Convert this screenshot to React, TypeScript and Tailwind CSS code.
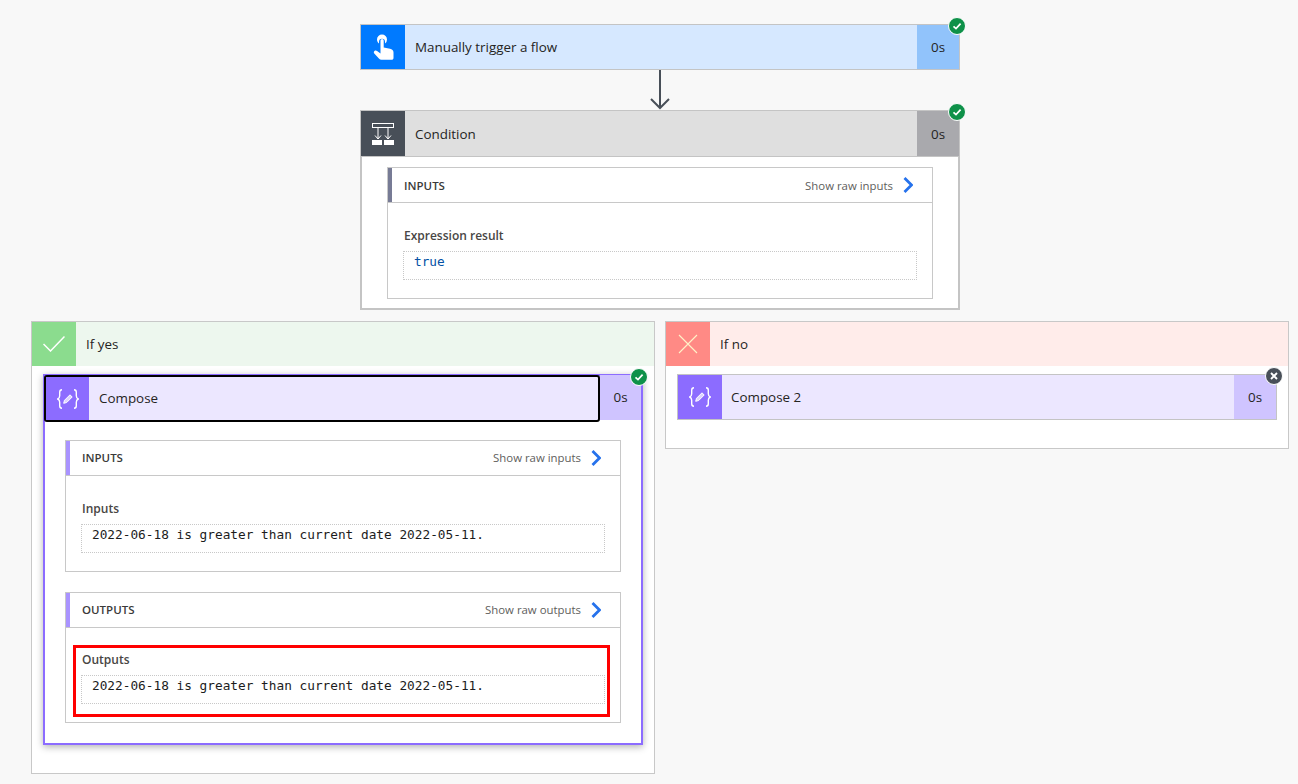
import type { ReactNode } from "react";

const sans = "font-['Open_Sans','Noto_Sans',sans-serif]";

function OkBadge({ className }: { className: string }) {
  return (
    <span className={`absolute z-10 flex h-[18px] w-[18px] items-center justify-center rounded-full border border-white bg-[#0e9149] ${className}`}>
      <svg viewBox="0 0 10 10" className="h-[10px] w-[10px]" fill="none" stroke="white" strokeWidth="1.7">
        <path d="M1.5 5.3 4 7.6 8.6 2.6" />
      </svg>
    </span>
  );
}

function SkipBadge({ className }: { className: string }) {
  return (
    <span className={`absolute z-10 flex h-[18px] w-[18px] items-center justify-center rounded-full border border-white bg-[#484f58] ${className}`}>
      <svg viewBox="0 0 10 10" className="h-[10px] w-[10px]" fill="none" stroke="white" strokeWidth="1.9">
        <path d="M2 2 8 8M8 2 2 8" />
      </svg>
    </span>
  );
}

function HandIcon() {
  return (
    <svg viewBox="-2 0 24 28" className="h-[28px] w-[24px]" fill="white">
      <path d="M9 1.5a5 5 0 0 0-5 5c0 1.7.8 3.2 2 4.100V8.800a3 3 0 1 1 6 0v1.800a5 5 0 0 0 2-4.100 5 5 0 0 0-5-5Z" />
      <path d="M7.500 7.500a1.600 1.600 0 0 1 3.200 0v7l6.300 1.300c2 .4 3.500 1.700 3.500 3.700V25c0 1-.8 1.800-1.800 1.800H8.500c-1 0-1.900-.4-2.600-1.200L1.300 20.500c-.7-.8-.6-2 .2-2.600.8-.6 1.900-.5 2.600.2l3.400 2.400Z" />
    </svg>
  );
}

function ConditionIcon() {
  return (
    <svg viewBox="0 0 22 22" className="h-[22px] w-[22px]" fill="none" stroke="white">
      <rect x=".5" y=".5" width="21" height="4" />
      <path d="M6 5V16M16 5V16M3 12.500l3 3.500 3-3.500M13 12.500l3 3.500 3-3.500" />
      <rect x="0" y="17" width="10" height="5" fill="white" stroke="none" />
      <rect x="12" y="17" width="10" height="5" fill="white" stroke="none" />
    </svg>
  );
}

function ComposeIcon() {
  return (
    <svg viewBox="0 0 22 20" className="h-[20px] w-[22px]" fill="none" stroke="white" strokeWidth="1.400">
      <path d="M5 .8c-1.800 0-2.300.9-2.300 2.500v3.500c0 1.800-.5 2.700-2 3.200 1.500.5 2 1.400 2 3.200v3.500c0 1.600.5 2.500 2.300 2.500" />
      <path d="M17 .8c1.800 0 2.300.9 2.300 2.500v3.500c0 1.800.5 2.700 2 3.200-1.500.5-2 1.400-2 3.200v3.500c0 1.600-.5 2.500-2.300 2.500" />
      <path d="M6.700 14.300 7.500 11.300 13 5.800 15.200 8 9.700 13.500Z" fill="white" fillOpacity="0.7" strokeWidth="1" />
    </svg>
  );
}

function Chevron() {
  return (
    <svg viewBox="0 0 10 16" className="ml-[10px] h-[16px] w-[10px]" fill="none" stroke="#2672ec" strokeWidth="2.800">
      <path d="M1.500 1 8.500 8 1.500 15" />
    </svg>
  );
}

function Panel({
  title,
  link,
  bar,
  label,
  value,
  mono,
  labelGap,
  head,
}: {
  title: string;
  link: string;
  bar: string;
  label: string;
  value: string;
  mono: string;
  labelGap: string;
  head: string;
}) {
  return (
    <div className="border border-[#c8c8c8] bg-white">
      <div className="flex h-[35px] items-center border-b border-[#c8c8c8]">
        <div className={`h-full w-[4px] ${bar}`} />
        <span className={`ml-[12px] flex-1 text-[11.500px] font-semibold text-[#3b3a39] ${head}`}>{title}</span>
        <span className={`text-[11.400px] text-[#605e5c] ${head}`}>{link}</span>
        <span className="mr-[19px]">
          <Chevron />
        </span>
      </div>
      <div className="px-[15px] pb-[18px] pt-[25px]">
        <div className={`h-[16px] pl-px text-[12px] font-semibold leading-[16px] text-[#484644] ${labelGap}`}>{label}</div>
        <div className={`h-[29px] border border-dotted border-[#c8c8c8] pl-[10px] font-['DejaVu_Sans_Mono',monospace] text-[12.770px] leading-[19px] ${mono}`}>
          {value}
        </div>
      </div>
    </div>
  );
}

function Compose2() {
  return (
    <div className="relative flex h-[46px] border border-[#c4c4c4]">
      <div className="flex w-[44px] items-center justify-center bg-[#8c6cff]">
        <ComposeIcon />
      </div>
      <div className="flex flex-1 items-center bg-[#ece7ff] pl-[9px] text-[13.400px] text-[#252423]">Compose 2</div>
      <div className="flex w-[42px] items-center justify-center bg-[#cfc4ff] text-[13.400px] text-[#252423]">0s</div>
      <SkipBadge className="-right-[7px] -top-[8px]" />
    </div>
  );
}

function Branch({ head, tint, label, icon, children }: { head: string; tint: string; label: string; icon: ReactNode; children: ReactNode }) {
  return (
    <div className="w-[624px] border border-[#c8c8c8] bg-white">
      <div className={`flex h-[44px] items-center ${tint}`}>
        <div className={`flex h-full w-[44px] items-center justify-center ${head}`}>{icon}</div>
        <span className="ml-[10px] text-[13.400px] text-[#252423]">{label}</span>
      </div>
      <div className="px-[11px] pb-[28px] pt-[8px]">{children}</div>
    </div>
  );
}

export default function App() {
  const msg = "2022-06-18 is greater than current date 2022-05-11.";
  return (
    <div className={`min-h-[784px] bg-[#f8f8f8] pl-[31px] pt-[24px] ${sans}`}>
      <div className="flex w-[1258px] flex-col items-center">
        {/* trigger */}
        <div className="relative flex h-[46px] w-[600px] border border-[#c4c4c4]">
          <div className="flex w-[44px] items-center justify-center bg-[#007aff]">
            <HandIcon />
          </div>
          <div className="flex flex-1 items-center bg-[#d6e8ff] pl-[10px] text-[13.400px] text-[#252423]">Manually trigger a flow</div>
          <div className="flex w-[42px] items-center justify-center bg-[#91c3fb] text-[13.400px] text-[#252423]">0s</div>
          <OkBadge className="-right-[7px] -top-[8px]" />
        </div>

        <svg viewBox="0 0 24 40" className="h-[40px] w-[24px]" fill="none" stroke="#484f58" strokeWidth="2">
          <path d="M12 0V38M3 29l9 9 9-9" />
        </svg>

        {/* condition */}
        <div className="relative w-[600px]">
          <div className="flex h-[47px] border border-[#c4c4c4]">
            <div className="flex w-[44px] items-center justify-center bg-[#484f58]">
              <ConditionIcon />
            </div>
            <div className="flex flex-1 items-center bg-[#dfdfdf] pl-[10px] pt-[2px] text-[13.400px] text-[#252423]">Condition</div>
            <div className="flex w-[42px] items-center justify-center bg-[#a9a9ad] pt-[2px] text-[13.400px] text-[#252423]">0s</div>
          </div>
          <OkBadge className="-right-[6px] -top-[7px]" />
          <div className="border-x-2 border-b-2 border-[#c4c4c4] bg-white px-[25px] pb-[9px] pt-[10px]">
            <Panel title="INPUTS" link="Show raw inputs" bar="bg-[#777b95]" label="Expression result" value="true" mono="text-[#0451a5]" labelGap="mb-[7px]" head="pt-[2px]" />
          </div>
        </div>

        {/* branches */}
        <div className="mt-[11px] flex items-start gap-[10px]">
          <Branch
            head="bg-[#8bdc8e]"
            tint="bg-[#edf7ee]"
            label="If yes"
            icon={
              <svg viewBox="0 0 22 16" className="h-[16px] w-[22px]" fill="none" stroke="white" strokeWidth="1.500">
                <path d="M.5 8l7 7L21.500.5" />
              </svg>
            }
          >
            <div className="relative border-2 border-[#8c6cff] bg-white shadow-[0_2px_7px_rgba(0,0,0,0.3)]">
              <div className="-mt-px flex h-[47px] items-start">
                <div className="-ml-px flex h-[47px] flex-1 items-center rounded-[3px] border-2 border-black bg-[#ece7ff]">
                  <div className="flex h-full w-[43px] items-center justify-center bg-[#8c6cff]">
                    <ComposeIcon />
                  </div>
                  <span className="ml-[10px] text-[13.400px] text-[#252423]">Compose</span>
                </div>
                <div className="flex h-[45px] w-[41px] items-center justify-center bg-[#cfc4ff] text-[13.400px] text-[#252423]">0s</div>
              </div>
              <OkBadge className="-right-[7px] -top-[8px]" />
              <div className="flex flex-col gap-[20px] px-[20px] pb-[20px] pt-[18px]">
                <Panel title="INPUTS" link="Show raw inputs" bar="bg-[#a993ff]" label="Inputs" value={msg} mono="text-[#1c1c1c]" labelGap="mb-[7px]" head="pb-px" />
                <div className="relative">
                  <Panel title="OUTPUTS" link="Show raw outputs" bar="bg-[#a993ff]" label="Outputs" value={msg} mono="text-[#1c1c1c]" labelGap="-mt-px mb-[7px]" head="pb-px" />
                  <div className="absolute bottom-[6px] left-[8px] right-[11px] top-[53px] border-[3px] border-[#ff0000]" />
                </div>
              </div>
            </div>
          </Branch>
          <Branch
            head="bg-[#ff8a85]"
            tint="bg-[#ffecea]"
            label="If no"
            icon={
              <svg viewBox="0 0 20 20" className="h-[20px] w-[20px]" fill="none" stroke="#fff3c8" strokeWidth="1.100">
                <path d="M1 1 19 19M19 1 1 19" />
              </svg>
            }
          >
            <Compose2 />
          </Branch>
        </div>
      </div>
    </div>
  );
}
